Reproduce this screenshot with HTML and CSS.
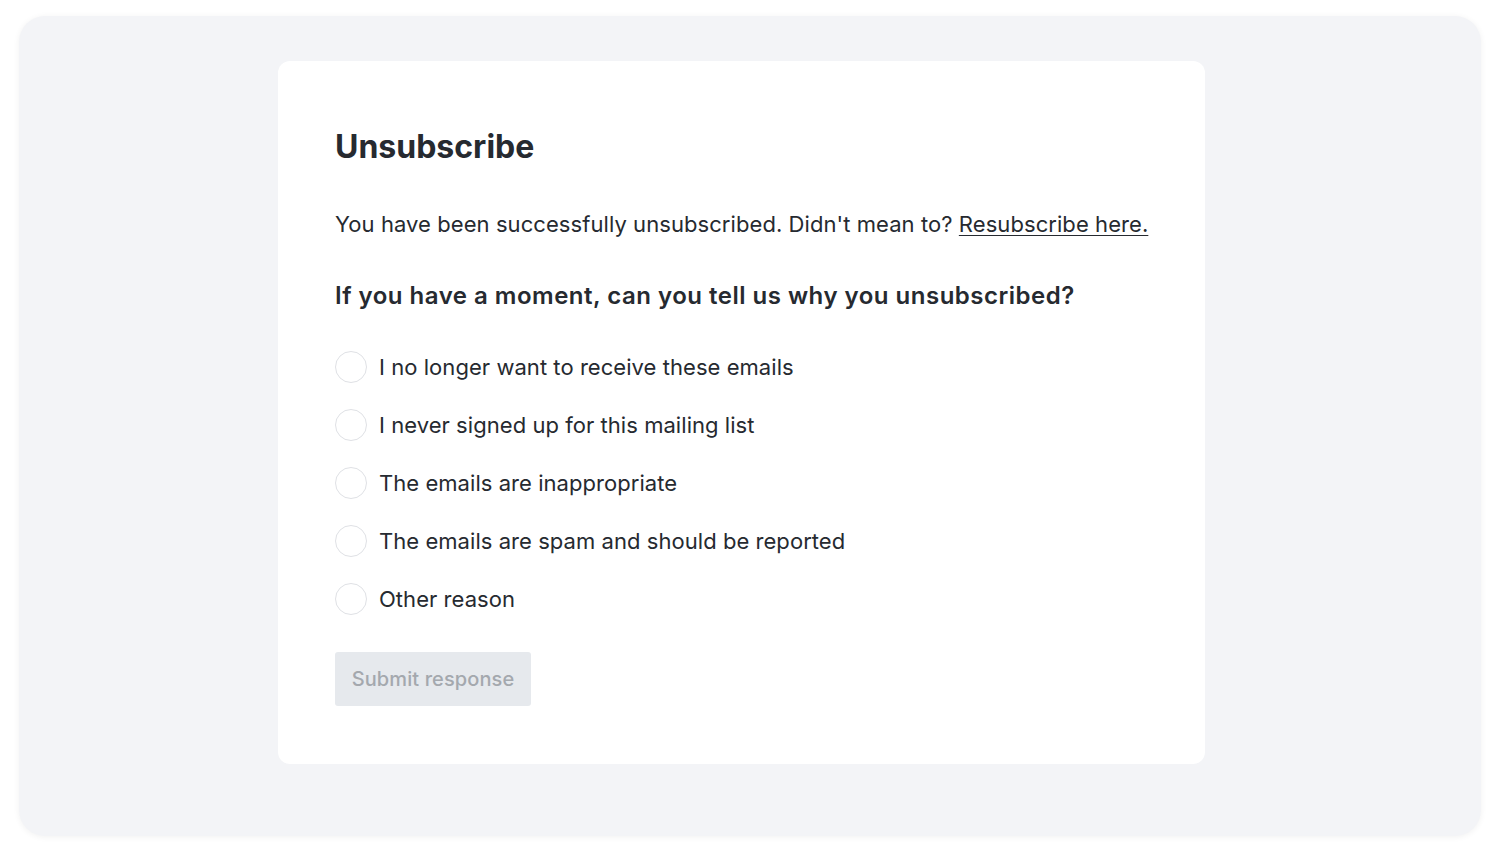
FILE: index.html
```html
<!DOCTYPE html>
<html lang="en">
<head>
<meta charset="utf-8">
<title>Unsubscribe</title>
<link rel="stylesheet" href="styles.css">
</head>
<body>
<div class="frame">
  <main class="card">
    <h1 class="title">Unsubscribe</h1>
    <p class="lead">You have been successfully unsubscribed. Didn't mean to? <a href="#" class="link">Resubscribe here.</a></p>
    <h2 class="question">If you have a moment, can you tell us why you unsubscribed?</h2>
    <form class="reasons">
      <label class="option"><input type="radio" name="r" class="radio"><span>I no longer want to receive these emails</span></label>
      <label class="option"><input type="radio" name="r" class="radio"><span>I never signed up for this mailing list</span></label>
      <label class="option"><input type="radio" name="r" class="radio"><span>The emails are inappropriate</span></label>
      <label class="option"><input type="radio" name="r" class="radio"><span>The emails are spam and should be reported</span></label>
      <label class="option"><input type="radio" name="r" class="radio"><span>Other reason</span></label>
      <button type="button" class="submit" disabled>Submit response</button>
    </form>
  </main>
</div>
</body>
</html>
```

FILE: styles.css
```css
* { box-sizing: border-box; }
html, body { margin: 0; padding: 0; background: #ffffff; }
body {
  font-family: Inter, "Noto Sans", sans-serif;
  color: #262a30;
  padding: 16px 19px 23px 19px;
}
.frame {
  height: 820px;
  background: #f3f4f7;
  border-radius: 26px;
  box-shadow: 0 1px 6px rgba(0,0,0,0.06);
  padding: 45px 0 0 259px;
  display: flex;
  justify-content: flex-start;
  align-items: flex-start;
}
.card {
  width: 927px;
  height: 703px;
  background: #ffffff;
  border-radius: 12px;
  padding: 66px 30px 0 57px;
}
.title {
  margin: 0;
  font-size: 32px;
  font-weight: 700;
  line-height: 40px;
  letter-spacing: 0;
}
.lead {
  margin: 42px 0 0 0;
  font-size: 22px;
  line-height: 30px;
  letter-spacing: 0.07px;
  white-space: nowrap;
}
.link { color: #262a30; text-decoration: underline; text-underline-offset: 3px; text-decoration-thickness: 1px; }
.question {
  margin: 41px 0 0 0;
  font-size: 24px;
  font-weight: 600;
  line-height: 32px;
  letter-spacing: 0.5px;
}
.reasons {
  margin-top: 39px;
  display: flex;
  flex-direction: column;
  align-items: flex-start;
  gap: 26px;
}
.option {
  display: flex;
  align-items: center;
  gap: 12px;
  font-size: 22px;
  line-height: 32px;
  letter-spacing: 0.05px;
}
.radio {
  appearance: none;
  -webkit-appearance: none;
  margin: 0;
  width: 32px;
  height: 32px;
  border-radius: 50%;
  border: 1.5px solid #dfe1e5;
  background: #fff;
}
.submit {
  margin-top: 11px;
  width: 196px;
  height: 54px;
  border: none;
  border-radius: 3px;
  background: #e6e9ed;
  color: #a4a8ae;
  font-family: inherit;
  font-size: 20px;
  font-weight: 500;
  letter-spacing: 0.1px;
}
```
